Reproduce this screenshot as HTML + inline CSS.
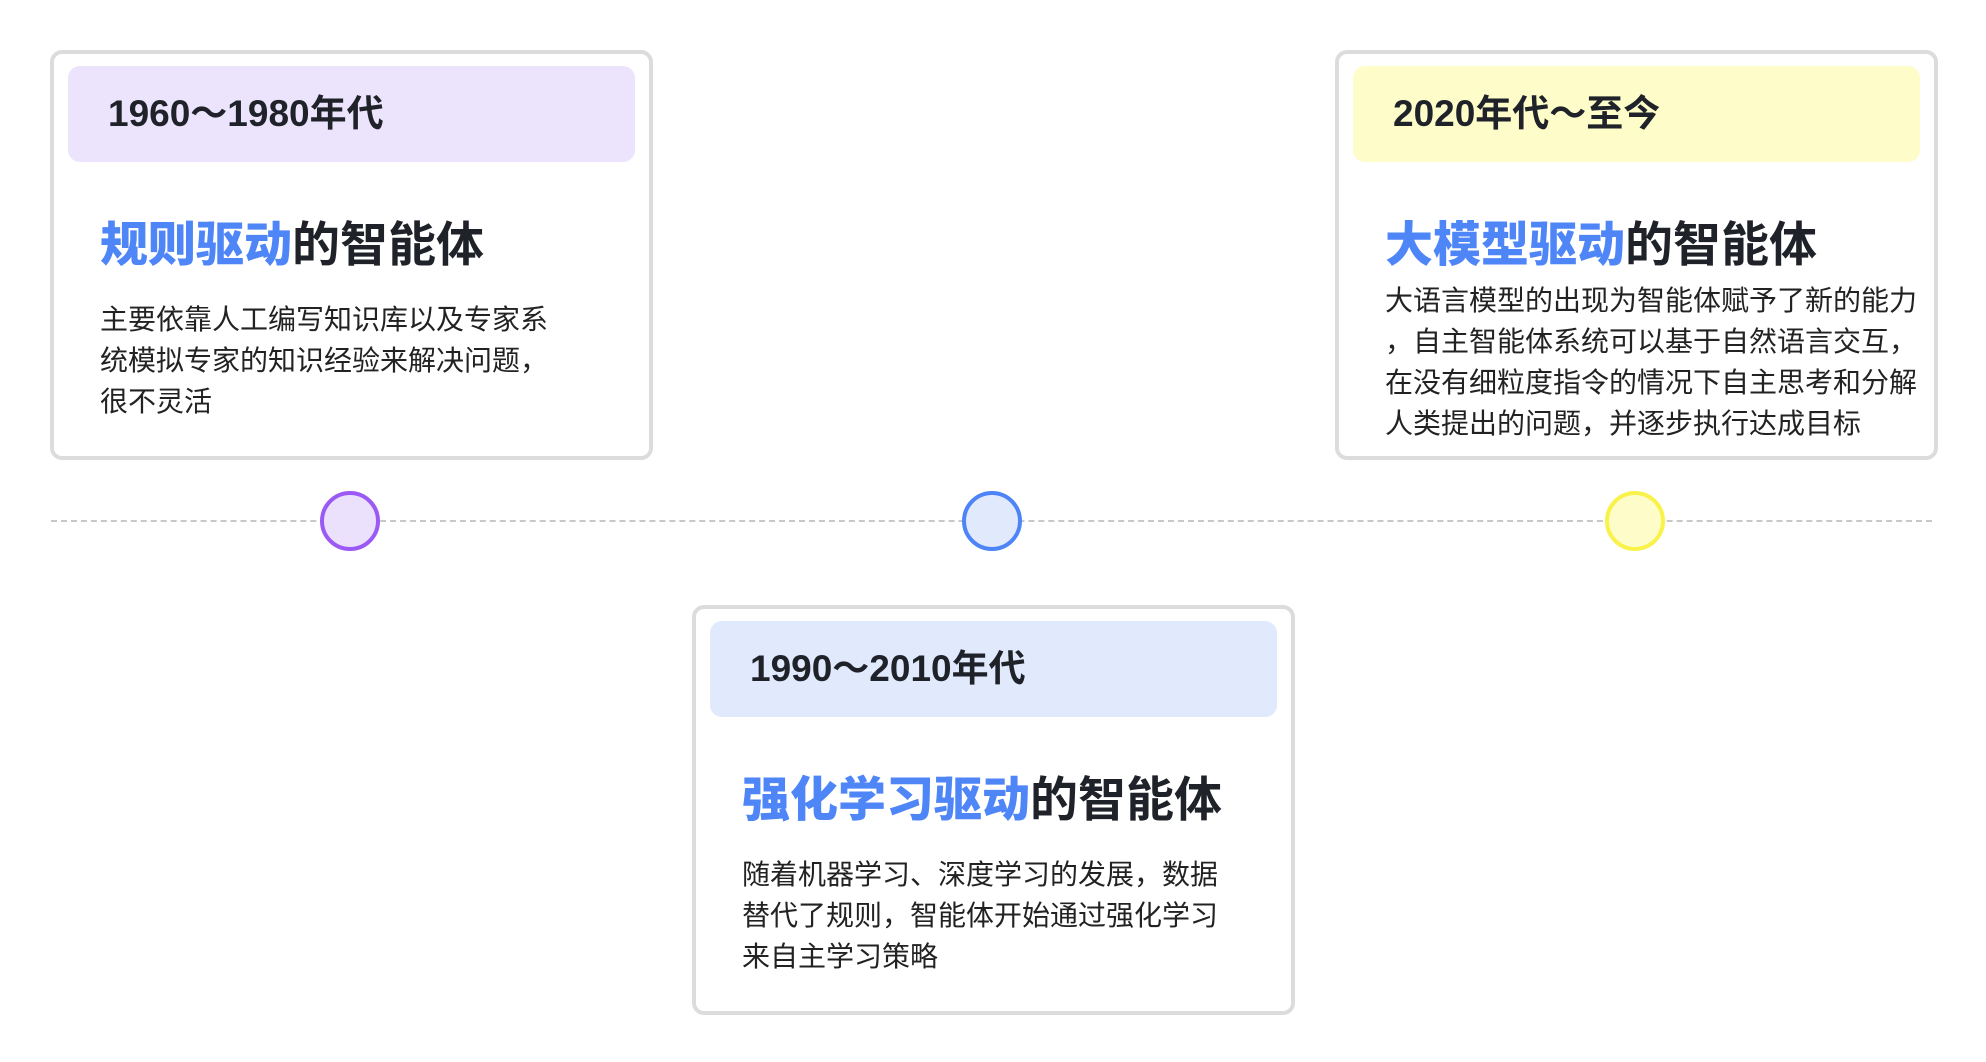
<!DOCTYPE html>
<html><head><meta charset="utf-8"><style>
body{margin:0;width:1986px;height:1062px;background:#fff;position:relative;overflow:hidden;font-family:"Liberation Sans","Noto Sans CJK SC",sans-serif;color:#1f2329}
.card{position:absolute;width:603px;height:410px;border:4px solid #dcdcdc;border-radius:12px;box-sizing:border-box;background:#fff}
.hd{position:absolute;left:14px;top:12px;width:567px;height:96px;border-radius:12px;font-size:37px;font-weight:bold;line-height:96px;padding-left:40px;box-sizing:border-box}
.tt{position:absolute;left:46px;font-size:48px;font-weight:bold;white-space:nowrap;line-height:60px}
.tt b{color:#4f86f7}
.bd{position:absolute;left:46px;font-size:28px;line-height:41px;white-space:nowrap;color:#222}
.line{position:absolute;left:51px;top:520px;border-top:2px dashed #c8c8c8}
.dot{position:absolute;top:491px;width:60px;height:60px;border-radius:50%;box-sizing:border-box;border:4px solid}
</style></head><body>
<div class="line" style="width:1881px"></div>
<div class="dot" style="left:320px;background:#ebe1fc;border-color:#9b59f5"></div>
<div class="dot" style="left:962px;background:#e1e9fd;border-color:#4d84f7"></div>
<div class="dot" style="left:1605px;background:#fefdc9;border-color:#f8f24a"></div>

<div class="card" style="left:50px;top:50px">
<div class="hd" style="background:#ece3fd">1960～1980年代</div>
<div class="tt" style="top:162px"><b>规则驱动</b>的智能体</div>
<div class="bd" style="top:245px">主要依靠人工编写知识库以及专家系<br>统模拟专家的知识经验来解决问题，<br>很不灵活</div>
</div>

<div class="card" style="left:692px;top:605px">
<div class="hd" style="background:#e1e9fd">1990～2010年代</div>
<div class="tt" style="top:162px"><b>强化学习驱动</b>的智能体</div>
<div class="bd" style="top:245px">随着机器学习、深度学习的发展，数据<br>替代了规则，智能体开始通过强化学习<br>来自主学习策略</div>
</div>

<div class="card" style="left:1335px;top:50px">
<div class="hd" style="background:#fefdc9">2020年代～至今</div>
<div class="tt" style="top:162px"><b>大模型驱动</b>的智能体</div>
<div class="bd" style="top:226px">大语言模型的出现为智能体赋予了新的能力<br>，自主智能体系统可以基于自然语言交互，<br>在没有细粒度指令的情况下自主思考和分解<br>人类提出的问题，并逐步执行达成目标</div>
</div>
</body></html>
